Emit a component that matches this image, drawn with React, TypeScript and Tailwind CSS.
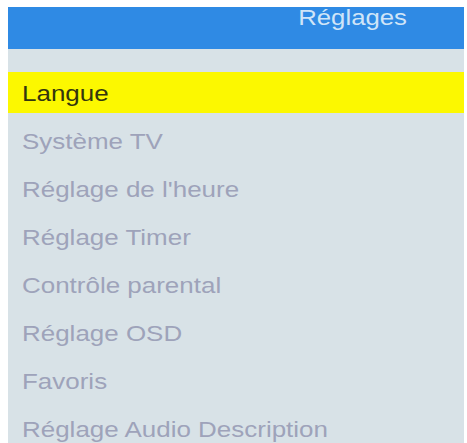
const items = [
  "Langue",
  "Système TV",
  "Réglage de l'heure",
  "Réglage Timer",
  "Contrôle parental",
  "Réglage OSD",
  "Favoris",
  "Réglage Audio Description",
];

export default function App() {
  return (
    <div className="h-[443px] w-[467px] overflow-hidden bg-white pl-[8px] pt-[7px] font-['Liberation_Sans',Arial,sans-serif]">
      <div className="flex h-[436px] w-[456px] flex-col bg-[#d8e2e7]">
        <div className="flex h-[42px] shrink-0 justify-end bg-[#2f8ae4] pr-[57px]">
          <span className="inline-block origin-right scale-x-[1.17] text-[22px] leading-[22px] text-[#cfe5f8]">
            Réglages
          </span>
        </div>
        <ul className="pt-[19px]">
          {items.map((item, index) => (
            <li className="flex h-12 items-center" key={item}>
              <div
                className={
                  index === 0
                    ? "flex h-[41px] w-full items-center bg-[#fcf800] pl-[14px] pt-[3px] text-[#34360e]"
                    : "flex h-[41px] w-full items-center pl-[14px] pt-[3px] text-[#9ea3ba]"
                }
              >
                <span className="inline-block origin-left scale-x-[1.18] text-[22px] leading-[26px] whitespace-nowrap">
                  {item}
                </span>
              </div>
            </li>
          ))}
        </ul>
      </div>
    </div>
  );
}
